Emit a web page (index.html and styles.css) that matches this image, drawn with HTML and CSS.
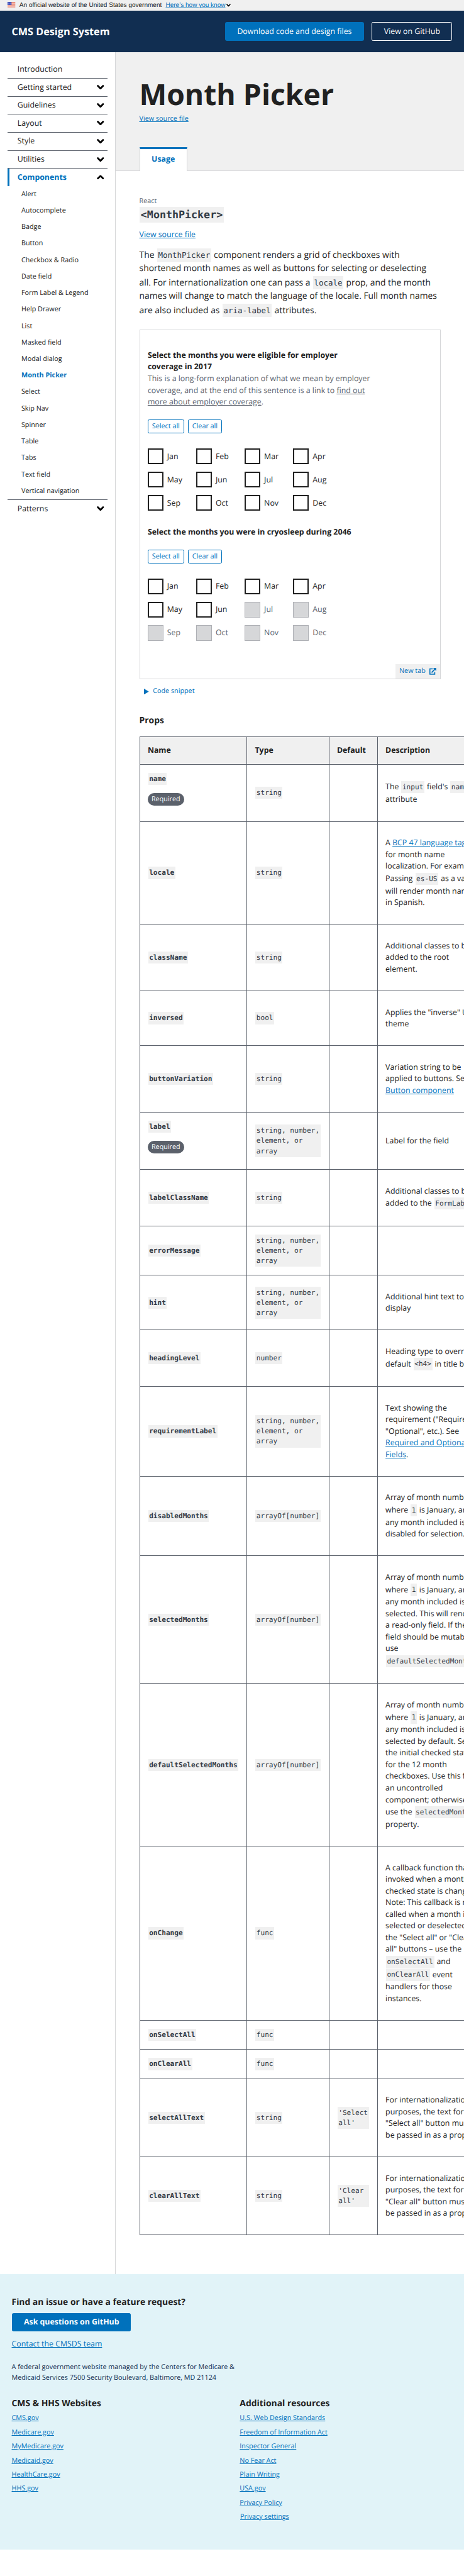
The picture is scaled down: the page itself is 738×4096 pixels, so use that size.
FILE: index.html
```html
<!DOCTYPE html>
<html lang="en">
<head>
<meta charset="utf-8">
<title>Month Picker - CMS Design System</title>
<link rel="stylesheet" href="styles.css">
</head>
<body>
<svg class="defs" aria-hidden="true">
  <symbol id="chev" viewBox="0 0 14 9"><path d="M1.900 1.900 7 7l5.100-5.100" fill="none" stroke="#000" stroke-width="3.400" stroke-linecap="round" stroke-linejoin="round"/></symbol>
</svg>
<div class="page">
  <div class="banner">
    <svg class="flag" viewBox="0 0 16 11"><path fill="#fff" d="M0 0h16v11H0z"/><path stroke="#db3e1f" d="M0 .5h16M0 2.500h16M0 4.500h16M0 6.500h16M0 8.500h16M0 10.500h16"/><path fill="#1e33b1" d="M0 0h8v6.500H0z"/><path stroke="#fff" stroke-dasharray="1 1" d="M1 1.500h6M1 3.500h6M1 5.300h6"/></svg>
    <span class="banner-text">An official website of the United States government</span>
    <a class="link" href="#">Here’s how you know</a>
    <svg class="banner-chev"><use href="#chev"/></svg>
  </div>
  <header class="header">
    <div class="brand">CMS Design System</div>
    <a class="btn btn-primary" href="#">Download code and design files</a>
    <a class="btn btn-ghost" href="#">View on GitHub</a>
  </header>
  <div class="body">
    <nav class="side">
      <a class="side-item first">Introduction</a>
      <a class="side-item">Getting started<svg class="chev"><use href="#chev"/></svg></a>
      <a class="side-item">Guidelines<svg class="chev"><use href="#chev"/></svg></a>
      <a class="side-item">Layout<svg class="chev"><use href="#chev"/></svg></a>
      <a class="side-item">Style<svg class="chev"><use href="#chev"/></svg></a>
      <a class="side-item">Utilities<svg class="chev"><use href="#chev"/></svg></a>
      <a class="side-item current">Components<svg class="chev up"><use href="#chev"/></svg></a>
      <a class="sub">Alert</a>
      <a class="sub">Autocomplete</a>
      <a class="sub">Badge</a>
      <a class="sub">Button</a>
      <a class="sub">Checkbox &amp; Radio</a>
      <a class="sub">Date field</a>
      <a class="sub">Form Label &amp; Legend</a>
      <a class="sub">Help Drawer</a>
      <a class="sub">List</a>
      <a class="sub">Masked field</a>
      <a class="sub">Modal dialog</a>
      <a class="sub selected">Month Picker</a>
      <a class="sub">Select</a>
      <a class="sub">Skip Nav</a>
      <a class="sub">Spinner</a>
      <a class="sub">Table</a>
      <a class="sub">Tabs</a>
      <a class="sub">Text field</a>
      <a class="sub">Vertical navigation</a>
      <a class="side-item">Patterns<svg class="chev"><use href="#chev"/></svg></a>
    </nav>
    <main class="main">
      <div class="hero">
        <h1 class="title">Month Picker</h1>
        <div class="hero-source"><a class="link" href="#">View source file</a></div>
        <div class="tabs"><a class="tab">Usage</a></div>
      </div>
      <div class="content">
        <div class="lang">React</div>
        <h2 class="component"><code class="code">&lt;MonthPicker&gt;</code></h2>
        <div class="source"><a class="link" href="#">View source file</a></div>
        <p class="intro">The <code class="code">MonthPicker</code> component renders a grid of checkboxes with<br>shortened month names as well as buttons for selecting or deselecting<br>all. For internationalization one can pass a <code class="code">locale</code> prop, and the month<br>names will change to match the language of the locale. Full month names<br>are also included as <code class="code">aria-label</code> attributes.</p>
        <section class="example">
          <div class="picker">
            <div class="legend">Select the months you were eligible for employer<br>coverage in 2017</div>
            <div class="hint">This is a long-form explanation of what we mean by employer<br>coverage, and at the end of this sentence is a link to <a class="muted-link" href="#">find out<br>more about employer coverage</a>.</div>
            <div class="actions"><a class="small-btn select-all">Select all</a><a class="small-btn clear-all">Clear all</a></div>
            <div class="months">
              <label class="month"><i class="box"></i>Jan</label><label class="month"><i class="box"></i>Feb</label><label class="month"><i class="box"></i>Mar</label><label class="month"><i class="box"></i>Apr</label>
              <label class="month"><i class="box"></i>May</label><label class="month"><i class="box"></i>Jun</label><label class="month"><i class="box"></i>Jul</label><label class="month"><i class="box"></i>Aug</label>
              <label class="month"><i class="box"></i>Sep</label><label class="month"><i class="box"></i>Oct</label><label class="month"><i class="box"></i>Nov</label><label class="month"><i class="box"></i>Dec</label>
            </div>
          </div>
          <div class="picker">
            <div class="legend">Select the months you were in cryosleep during 2046</div>
            <div class="actions"><a class="small-btn select-all">Select all</a><a class="small-btn clear-all">Clear all</a></div>
            <div class="months">
              <label class="month"><i class="box"></i>Jan</label><label class="month"><i class="box"></i>Feb</label><label class="month"><i class="box"></i>Mar</label><label class="month"><i class="box"></i>Apr</label>
              <label class="month"><i class="box"></i>May</label><label class="month"><i class="box"></i>Jun</label><label class="month off"><i class="box"></i>Jul</label><label class="month off"><i class="box"></i>Aug</label>
              <label class="month off"><i class="box"></i>Sep</label><label class="month off"><i class="box"></i>Oct</label><label class="month off"><i class="box"></i>Nov</label><label class="month off"><i class="box"></i>Dec</label>
            </div>
          </div>
          <a class="new-tab">New tab<svg class="ext" viewBox="0 0 14 14"><path fill="none" stroke="#0071bc" stroke-width="2" d="M7 2H1v11h10V8.500"/><path fill="none" stroke="#0071bc" stroke-width="2.400" d="M4.500 9.500l7-7"/><path fill="#0071bc" d="M7.500 0H14v6.500z"/></svg></a>
        </section>
        <a class="snippet"><svg class="tri" viewBox="0 0 10 12"><path fill="#0071bc" d="M0 0l10 6-10 6z"/></svg>Code snippet</a>
        <h3 class="props-title">Props</h3>
        <table class="props">
          <colgroup><col class="c-name"><col class="c-type"><col class="c-default"><col class="c-desc"></colgroup>
          <thead><tr><th>Name</th><th>Type</th><th>Default</th><th>Description</th></tr></thead>
          <tbody>
          <tr><td><code class="code">name</code><p><span class="badge">Required</span></p></td><td><code class="code">string</code></td><td></td><td><p>The <code class="code">input</code> field's <code class="code">name</code><br>attribute</p></td></tr>
          <tr><td><code class="code">locale</code></td><td><code class="code">string</code></td><td></td><td><p>A <a class="link" href="#">BCP 47 language tag</a><br>for month name<br>localization. For example:<br>Passing <code class="code">es-US</code> as a value<br>will render month names<br>in Spanish.</p></td></tr>
          <tr><td><code class="code">className</code></td><td><code class="code">string</code></td><td></td><td><p>Additional classes to be<br>added to the root<br>element.</p></td></tr>
          <tr><td><code class="code">inversed</code></td><td><code class="code">bool</code></td><td></td><td><p>Applies the "inverse" UI<br>theme</p></td></tr>
          <tr><td><code class="code">buttonVariation</code></td><td><code class="code">string</code></td><td></td><td><p>Variation string to be<br>applied to buttons. See<br><a class="link" href="#">Button component</a></p></td></tr>
          <tr><td><code class="code">label</code><p><span class="badge">Required</span></p></td><td><code class="code">string, number,<br>element, or<br>array</code></td><td></td><td><p>Label for the field</p></td></tr>
          <tr><td><code class="code">labelClassName</code></td><td><code class="code">string</code></td><td></td><td><p>Additional classes to be<br>added to the <code class="code">FormLabel</code></p></td></tr>
          <tr><td><code class="code">errorMessage</code></td><td><code class="code">string, number,<br>element, or<br>array</code></td><td></td><td></td></tr>
          <tr><td><code class="code">hint</code></td><td><code class="code">string, number,<br>element, or<br>array</code></td><td></td><td><p>Additional hint text to<br>display</p></td></tr>
          <tr><td><code class="code">headingLevel</code></td><td><code class="code">number</code></td><td></td><td><p>Heading type to override<br>default <code class="code">&lt;h4&gt;</code> in title box</p></td></tr>
          <tr><td><code class="code">requirementLabel</code></td><td><code class="code">string, number,<br>element, or<br>array</code></td><td></td><td><p>Text showing the<br>requirement ("Required",<br>"Optional", etc.). See<br><a class="link" href="#">Required and Optional<br>Fields</a>.</p></td></tr>
          <tr><td><code class="code">disabledMonths</code></td><td><code class="code">arrayOf[number]</code></td><td></td><td><p>Array of month numbers,<br>where <code class="code">1</code> is January, and<br>any month included is<br>disabled for selection.</p></td></tr>
          <tr><td><code class="code">selectedMonths</code></td><td><code class="code">arrayOf[number]</code></td><td></td><td><p>Array of month numbers,<br>where <code class="code">1</code> is January, and<br>any month included is<br>selected. This will render<br>a read-only field. If the<br>field should be mutable,<br>use<br><code class="code">defaultSelectedMonths</code></p></td></tr>
          <tr><td><code class="code">defaultSelectedMonths</code></td><td><code class="code">arrayOf[number]</code></td><td></td><td><p>Array of month numbers,<br>where <code class="code">1</code> is January, and<br>any month included is<br>selected by default. Sets<br>the initial checked state<br>for the 12 month<br>checkboxes. Use this for<br>an uncontrolled<br>component; otherwise,<br>use the <code class="code">selectedMonths</code><br>property.</p></td></tr>
          <tr><td><code class="code">onChange</code></td><td><code class="code">func</code></td><td></td><td><p>A callback function that's<br>invoked when a month's<br>checked state is changed.<br>Note: This callback is not<br>called when a month is<br>selected or deselected via<br>the "Select all" or "Clear<br>all" buttons – use the<br><code class="code">onSelectAll</code> and<br><code class="code">onClearAll</code> event<br>handlers for those<br>instances.</p></td></tr>
          <tr><td><code class="code">onSelectAll</code></td><td><code class="code">func</code></td><td></td><td></td></tr>
          <tr><td><code class="code">onClearAll</code></td><td><code class="code">func</code></td><td></td><td></td></tr>
          <tr><td><code class="code">selectAllText</code></td><td><code class="code">string</code></td><td><code class="code wide">'Select<br>all'</code></td><td><p>For internationalization<br>purposes, the text for the<br>"Select all" button must<br>be passed in as a prop</p></td></tr>
          <tr><td><code class="code">clearAllText</code></td><td><code class="code">string</code></td><td><code class="code wide">'Clear<br>all'</code></td><td><p>For internationalization<br>purposes, the text for the<br>"Clear all" button must<br>be passed in as a prop</p></td></tr>
          </tbody>
        </table>
      </div>
    </main>
  </div>
  <footer class="footer">
    <h2 class="foot-title">Find an issue or have a feature request?</h2>
    <a class="btn btn-primary ask" href="#">Ask questions on GitHub</a>
    <div class="contact"><a class="link" href="#">Contact the CMSDS team</a></div>
    <p class="address">A federal government website managed by the Centers for Medicare &amp;<br>Medicaid Services 7500 Security Boulevard, Baltimore, MD 21124</p>
    <div class="foot-cols">
      <div class="foot-col">
        <h2 class="foot-title">CMS &amp; HHS Websites</h2>
        <a class="link" href="#">CMS.gov</a>
        <a class="link" href="#">Medicare.gov</a>
        <a class="link" href="#">MyMedicare.gov</a>
        <a class="link" href="#">Medicaid.gov</a>
        <a class="link" href="#">HealthCare.gov</a>
        <a class="link" href="#">HHS.gov</a>
      </div>
      <div class="foot-col">
        <h2 class="foot-title">Additional resources</h2>
        <a class="link" href="#">U.S. Web Design Standards</a>
        <a class="link" href="#">Freedom of Information Act</a>
        <a class="link" href="#">Inspector General</a>
        <a class="link" href="#">No Fear Act</a>
        <a class="link" href="#">Plain Writing</a>
        <a class="link" href="#">USA.gov</a>
        <a class="link" href="#">Privacy Policy</a>
        <a class="link settings" href="#">Privacy settings</a>
      </div>
    </div>
  </footer>
</div>
</body>
</html>
```
FILE: styles.css
```css
* { box-sizing: border-box; }
html { background: #fff; }
body { margin: 0; overflow-x: hidden; }
h1, h2, h3, p { margin: 0; }
.defs { display: none; }

.page {
  zoom: 0.77196;
  width: 956px;
  height: 5306px;
  overflow: hidden;
  font: 16px/24px "Open Sans", sans-serif;
  color: #212121;
  white-space: nowrap;
  text-rendering: geometricPrecision;
}
.link { color: #0071bc; text-decoration: underline; }

/* Government banner */
.banner {
  display: flex;
  align-items: center;
  height: 22px;
  padding: 0 16px;
  background: #f0f0f0;
  font-family: "Liberation Sans", Arial, sans-serif;
  font-size: 13px;
  line-height: 20px;
}
.flag { width: 16px; height: 11px; margin: -2px 8px 0 0; }
.banner-text { margin-right: 8px; }
.banner-chev { width: 9px; height: 6px; margin-left: 1.5px; }

/* Site header */
.header {
  display: flex;
  align-items: center;
  gap: 16px;
  height: 86px;
  padding: 0 24px;
  background: #112e51;
  color: #fff;
}
.brand { flex: 1; font-size: 21px; font-weight: 700; }
.btn {
  height: 38px;
  padding: 6px 24px;
  border: 1px solid transparent;
  border-radius: 3px;
  color: #fff;
  text-align: center;
  text-decoration: none;
}
.btn-primary { background: #0071bc; border-color: #0071bc; }
.btn-ghost { border-color: #fff; }

/* Side navigation */
.body { display: flex; height: 4576px; }
.side {
  flex: none;
  width: 239px;
  padding: 16px 16px 0;
  border-right: 1px solid #d6d7d9;
}
.side-item {
  display: flex;
  align-items: center;
  justify-content: space-between;
  height: 37px;
  padding: 0 7px 0 20px;
  border-top: 1px solid #5b616b;
}
.first { border-top-color: transparent; }
.current {
  position: relative;
  color: #0071bc;
  font-weight: 700;
}
.current::before {
  content: "";
  position: absolute;
  inset: 0 auto 0 0;
  width: 4px;
  background: #0071bc;
}
.chev { width: 15px; height: 9.500px; }
.up { transform: rotate(180deg); }
.sub {
  display: block;
  height: 34px;
  padding-left: 28px;
  font-size: 14px;
  line-height: 33px;
}
.selected { color: #0071bc; font-weight: 700; }

/* Page heading */
.main { flex: 1; min-width: 0; }
.hero {
  height: 245px;
  padding: 48px 48px 0;
  background: #f0f0f0;
  border-bottom: 1px solid #d6d7d9;
}
.title { font-size: 60px; line-height: 78px; font-weight: 700; }
.hero-source { font-size: 14px; line-height: 21px; }
.tabs { display: flex; margin-top: 48px; }
.tab {
  height: 50px;
  padding: 9px 24px 0;
  border: solid #d6d7d9;
  border-width: 0 1px;
  border-top: 4px solid #0071bc;
  background: #fff;
  color: #0071bc;
  font-weight: 700;
}

/* Content */
.content { padding: 51px 48px 0; }
.lang { font-size: 14px; line-height: 21px; color: #5b616b; }
.code {
  display: inline-block;
  margin: 1px;
  padding: 2.600px 2px 1.400px;
  background: #f0f0f0;
  color: #323a45;
  font-family: "DejaVu Sans Mono", monospace;
  font-size: 0.9em;
  line-height: 1.460;
}
.component { display: flex; height: 34px; font-size: 24px; }
.component .code { line-height: 28px; }
.source { margin-top: 12px; }
.intro { height: 144px; margin-top: 16px; font-size: 18px; line-height: 27px; }
.example {
  display: flex;
  flex-direction: column;
  height: 720px;
  width: 621px;
  margin-top: 24px;
  padding: 40px 0 0 16px;
  border: 1px solid #d6d7d9;
}
.picker { margin-bottom: 32px; }
.legend { font-weight: 700; }
.hint { color: #5b616b; }
.muted-link { color: #5b616b; }
.actions { display: flex; gap: 8px; margin: 24px 0 32px; }
.small-btn {
  height: 28px;
  border: 1px solid #0071bc;
  border-radius: 3px;
  color: #0071bc;
  font-size: 14px;
  line-height: 25px;
  text-align: center;
}
.select-all { width: 75px; }
.clear-all { width: 70px; }
.months { display: grid; grid-template-columns: repeat(4, 100px); gap: 16px 0; }
.month { display: flex; align-items: center; gap: 8px; height: 32px; }
.box { width: 32px; height: 32px; border: 2.600px solid #212121; background: #fff; }
.off { color: #5b616b; }
.off .box { border: 1px solid #aeb0b5; background: #d6d7d9; }
.new-tab {
  display: flex;
  align-items: center;
  align-self: flex-end;
  gap: 8px;
  height: 30px;
  margin-top: auto;
  padding: 0 8px;
  background: #f0f0f0;
  color: #0071bc;
  font-size: 14px;
}
.ext { width: 14px; height: 14px; }
.snippet {
  display: flex;
  align-items: center;
  gap: 8px;
  height: 21px;
  margin-top: 14.500px;
  padding-left: 10px;
  color: #0071bc;
  font-size: 14px;
}
.tri { width: 10px; height: 12px; }
.props-title { margin: 38px 0 20px; font-size: 18px; line-height: 24px; }

/* Props table */
.props {
  width: 710px;
  table-layout: fixed;
  border-collapse: collapse;
}
.c-name { width: 221px; }
.c-type { width: 169px; }
.c-default { width: 100px; }
.c-desc { width: 220px; }
.props th, .props td {
  padding: 15.850px 16px;
  border: 1px solid #5b616b;
  text-align: left;
  vertical-align: middle;
}
.props th { background: #f0f0f0; }
.props p { margin: 16px 0; }
.props td:first-child .code { font-weight: 700; }
.wide { min-width: 65px; }
.badge {
  display: block;
  width: 75px;
  height: 26px;
  border-radius: 13px;
  background: #5b616b;
  color: #fff;
  font-size: 14px;
  line-height: 25px;
  text-align: center;
}

/* Footer */
.footer { height: 568px; padding: 47px 24px 0; background: #e1f3f8; }
.foot-title { font-size: 18px; line-height: 24px; font-weight: 700; }
.ask { display: block; width: 246px; margin-top: 9px; font-weight: 700; }
.contact { margin-top: 15px; }
.address { margin-top: 25px; color: #112e51; font-size: 14px; line-height: 21px; }
.foot-cols { display: grid; grid-template-columns: 470px 1fr; margin-top: 31px; }
.foot-col {
  display: flex;
  flex-direction: column;
  align-items: flex-start;
  gap: 8px;
  font-size: 14px;
  line-height: 21px;
}
.settings { margin-left: 1px; }
```
